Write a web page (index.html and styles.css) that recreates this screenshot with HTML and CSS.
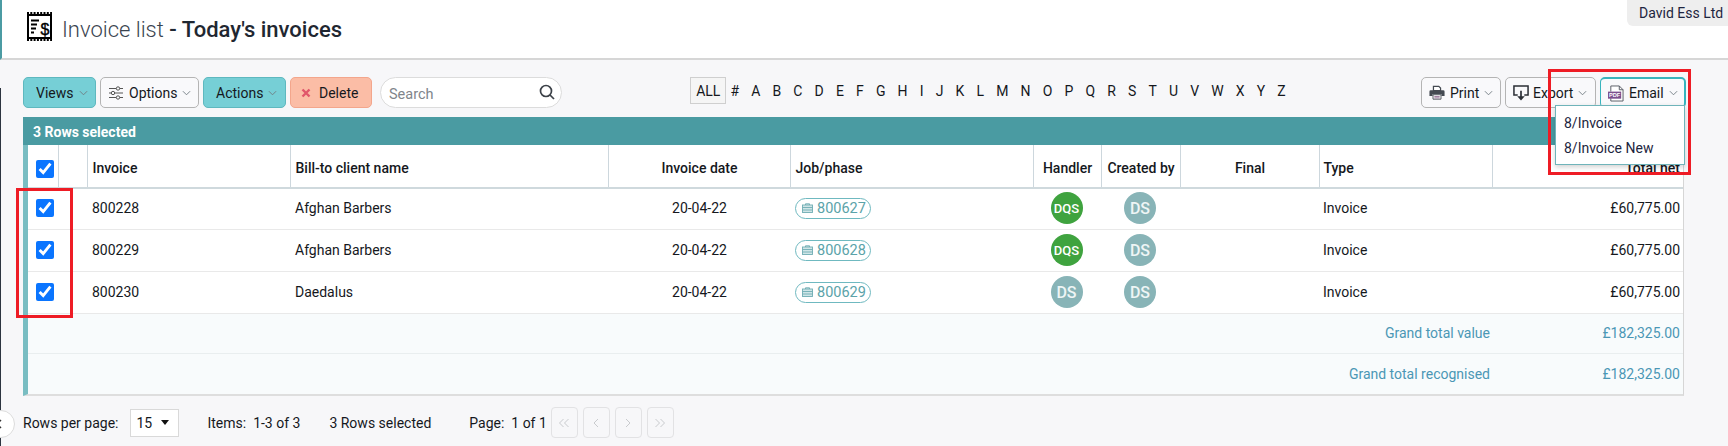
FILE: index.html
```html
<!DOCTYPE html>
<html lang="en">
<head>
<meta charset="utf-8">
<title>Invoice list</title>
<link rel="stylesheet" href="styles.css">
</head>
<body>
<div class="edge"></div>
<header class="top">
  <svg class="title-icon" width="25" height="29" viewBox="0 0 25 29">
    <rect x="1" y="3" width="23" height="23" fill="#fff" stroke="#000" stroke-width="2"/>
    <path d="M0 1h25M0 28h25" stroke="#000" stroke-width="2" stroke-dasharray="2 1.3" fill="none"/>
    <path d="M4 8.5h8M4 12.500h6M4 16.500h5M4 20.500h3" stroke="#000" stroke-width="1.800" fill="none"/>
    <text x="13.500" y="23" class="title-icon-sign">$</text>
  </svg>
  <h1 class="title"><span class="title-light">Invoice list</span> - Today's invoices</h1>
  <div class="company">David Ess Ltd</div>
</header>

<main class="main">
  <div class="toolbar">
    <div class="tool-group">
      <button class="btn btn-teal btn-views">Views<svg class="chev" viewBox="0 0 10 6"><path d="M1 1l4 4 4-4"/></svg></button>
      <button class="btn btn-options">
        <svg class="ico-opt" viewBox="0 0 14 14"><path d="M0 2.500h14M0 7h14M0 11.500h14"/><circle cx="9" cy="2.500" r="1.700"/><circle cx="4" cy="7" r="1.700"/><circle cx="9" cy="11.500" r="1.700"/></svg>
        Options<svg class="chev" viewBox="0 0 10 6"><path d="M1 1l4 4 4-4"/></svg></button>
      <button class="btn btn-teal btn-actions">Actions<svg class="chev" viewBox="0 0 10 6"><path d="M1 1l4 4 4-4"/></svg></button>
      <button class="btn btn-red"><svg class="ico-x" viewBox="0 0 10 10"><path d="M1.500 1.500l7 7M8.500 1.500l-7 7"/></svg>Delete</button>
      <div class="search">
        <span class="search-text">Search</span>
        <svg class="ico-search" viewBox="0 0 16 16"><circle cx="7" cy="7" r="5.500"/><path d="M11 11l4 4"/></svg>
      </div>
    </div>

    <nav class="alpha">
      <span class="alpha-all">ALL</span>
      <span>#</span><span>A</span><span>B</span><span>C</span><span>D</span><span>E</span><span>F</span><span>G</span><span>H</span><span>I</span><span>J</span><span>K</span><span>L</span><span>M</span><span>N</span><span>O</span><span>P</span><span>Q</span><span>R</span><span>S</span><span>T</span><span>U</span><span>V</span><span>W</span><span>X</span><span>Y</span><span>Z</span>
    </nav>

    <div class="tool-group">
      <button class="btn btn-print">
        <svg class="ico-18" viewBox="0 0 18 16"><path d="M5 6V1h6l2 2v3z" fill="#fff" stroke="#444a52" stroke-width="1.400"/><path d="M2 5.500h14a1.500 1.500 0 0 1 1.500 1.500v5H14v-2H4v2H.5V7A1.500 1.500 0 0 1 2 5.500z" fill="#444a52"/><path d="M4.500 10.500h9v5h-9z" fill="#fff" stroke="#444a52"/><path d="M6 12.500h6M6 14h6" stroke="#7a4d7c" stroke-width=".8"/></svg>
        Print<svg class="chev" viewBox="0 0 10 6"><path d="M1 1l4 4 4-4"/></svg></button>
      <button class="btn btn-export">
        <svg class="ico-exp" viewBox="0 0 17 17"><path d="M5 10.500H1V1h15v9.500h-4" fill="none" stroke="#2b2f36" stroke-width="1.600"/><path d="M8.500 6v7" stroke="#2b2f36" stroke-width="1.800"/><path d="M4.500 12h8l-4 4.500z" fill="#2b2f36"/></svg>
        Export<svg class="chev" viewBox="0 0 10 6"><path d="M1 1l4 4 4-4"/></svg></button>
      <button class="btn btn-open">
        <svg class="ico-pdf" viewBox="0 0 17 18"><path d="M3 7V1h9l4 4v12H3v-3" fill="#fff" stroke="#555a62"/><path d="M12 1v4h4" fill="none" stroke="#555a62"/><rect x="0" y="7" width="14" height="7.500" fill="#7c4f8e"/><text x="7" y="13" class="pdf-text">PDF</text></svg>
        Email<svg class="chev" viewBox="0 0 10 6"><path d="M1 1l4 4 4-4"/></svg></button>
    </div>
  </div>

  <section class="panel">
    <div class="panel-bar">3 Rows selected</div>
    <div class="grid">
      <table class="tbl">
        <colgroup>
          <col class="c-check"><col class="c-flag"><col class="c-inv"><col class="c-client"><col class="c-date"><col class="c-job"><col class="c-hand"><col class="c-made"><col class="c-final"><col class="c-type"><col class="c-total">
        </colgroup>
        <thead>
          <tr>
            <th class="cb"><input type="checkbox" checked></th>
            <th></th>
            <th>Invoice</th>
            <th>Bill-to client name</th>
            <th class="ctr">Invoice date</th>
            <th>Job/phase</th>
            <th class="ctr">Handler</th>
            <th class="ctr">Created by</th>
            <th class="ctr">Final</th>
            <th>Type</th>
            <th class="rgt">Total net</th>
          </tr>
        </thead>
        <tbody>
          <tr>
            <td class="cb"><input type="checkbox" checked></td><td></td>
            <td>800228</td><td>Afghan Barbers</td><td class="ctr">20-04-22</td>
            <td><span class="pill"><svg class="ico-case" viewBox="0 0 11 10"><path d="M3.500 2V.8h4V2"/><rect x=".5" y="2" width="10" height="7.500"/><path d="M.5 4.500h10M.5 7h10"/></svg>800627</span></td>
            <td class="ctr"><span class="av av-green">DQS</span></td>
            <td class="ctr"><span class="av">DS</span></td>
            <td></td><td>Invoice</td><td class="rgt">£60,775.00</td>
          </tr>
          <tr>
            <td class="cb"><input type="checkbox" checked></td><td></td>
            <td>800229</td><td>Afghan Barbers</td><td class="ctr">20-04-22</td>
            <td><span class="pill"><svg class="ico-case" viewBox="0 0 11 10"><path d="M3.500 2V.8h4V2"/><rect x=".5" y="2" width="10" height="7.500"/><path d="M.5 4.500h10M.5 7h10"/></svg>800628</span></td>
            <td class="ctr"><span class="av av-green">DQS</span></td>
            <td class="ctr"><span class="av">DS</span></td>
            <td></td><td>Invoice</td><td class="rgt">£60,775.00</td>
          </tr>
          <tr>
            <td class="cb"><input type="checkbox" checked></td><td></td>
            <td>800230</td><td>Daedalus</td><td class="ctr">20-04-22</td>
            <td><span class="pill"><svg class="ico-case" viewBox="0 0 11 10"><path d="M3.500 2V.8h4V2"/><rect x=".5" y="2" width="10" height="7.500"/><path d="M.5 4.500h10M.5 7h10"/></svg>800629</span></td>
            <td class="ctr"><span class="av">DS</span></td>
            <td class="ctr"><span class="av">DS</span></td>
            <td></td><td>Invoice</td><td class="rgt">£60,775.00</td>
          </tr>
        </tbody>
        <tfoot>
          <tr><td colspan="10" class="rgt">Grand total value</td><td class="rgt">£182,325.00</td></tr>
          <tr><td colspan="10" class="rgt">Grand total recognised</td><td class="rgt">£182,325.00</td></tr>
        </tfoot>
      </table>
    </div>
  </section>

  <footer class="pager">
    <span class="pager-label">Rows per page:</span>
    <span class="select">15<svg class="caret" viewBox="0 0 8 5"><path d="M0 0h8L4 5z"/></svg></span>
    <span class="pager-items">Items:&nbsp; 1-3 of 3</span>
    <span class="pager-sel">3 Rows selected</span>
    <span class="pager-page">Page:&nbsp; 1 of 1</span>
    <div class="pager-btns">
      <span class="pg"><svg viewBox="0 0 12 10"><path d="M5.500 1l-4 4 4 4M10.500 1l-4 4 4 4"/></svg></span>
      <span class="pg"><svg viewBox="0 0 12 10"><path d="M8 1L4 5l4 4"/></svg></span>
      <span class="pg"><svg viewBox="0 0 12 10"><path d="M4 1l4 4-4 4"/></svg></span>
      <span class="pg"><svg viewBox="0 0 12 10"><path d="M1.500 1l4 4-4 4M6.500 1l4 4-4 4"/></svg></span>
    </div>
  </footer>
</main>

<div class="collapse"><svg viewBox="0 0 6 10"><path d="M5 1L1 5l4 4"/></svg></div>

<ul class="menu">
  <li>8/Invoice</li>
  <li>8/Invoice New</li>
</ul>
<div class="mark mark-checks"></div>
<div class="mark mark-email"></div>
</body>
</html>
```
FILE: styles.css
```css
* { box-sizing: border-box; }
html, body { margin: 0; height: 446px; overflow: hidden; }
body {
  position: relative;
  background: #f7f7f9;
  font-family: Roboto, "Liberation Sans", sans-serif;
  font-size: 14px;
  color: #15181d;
}
.edge {
  position: absolute;
  left: 0; top: 88px; bottom: 0;
  width: 1px;
  background: #2c3440;
}
.top {
  height: 60px;
  background: #fff;
  border-bottom: 2px solid #d6d6d6;
  border-left: 2px solid #4b9ba3;
  display: flex;
  align-items: center;
  padding: 0 0 2px 25px;
}
.title-icon { flex: none; margin: -3px 10px 0 0; }
.title-icon-sign { font: 400 16px "Liberation Sans", sans-serif; fill: #000; stroke: #000; stroke-width: .4; }
.title { margin: 3px 0 0; font-size: 22px; font-weight: 500; color: #1f2731; }
.title-light { font-weight: 300; color: #3a4450; }
.company {
  position: absolute;
  top: 0; right: 0;
  width: 101px; height: 26px;
  padding: 0 4px 0 12px;
  background: #eeeeee;
  border-bottom-left-radius: 6px;
  line-height: 27px;
  font-size: 14px;
  white-space: nowrap;
  color: #1d2540;
}
.main { padding: 17px 42px 0 23px; }
.toolbar { display: flex; justify-content: space-between; align-items: flex-start; height: 31px; }
.tool-group { display: flex; gap: 4px; }
.btn {
  height: 31px;
  flex: none;
  display: flex;
  align-items: center;
  padding: 0 0 0 8px;
  border: 1px solid #b4b4b4;
  border-radius: 5px;
  background: #f9f9fb;
  font: 400 14px Roboto, sans-serif;
  color: #15181d;
  white-space: nowrap;
}
.btn-views { width: 73px; }
.btn-options { width: 99px; }
.btn-actions { width: 83px; }
.btn-print { width: 80px; padding-left: 7px; }
.btn-export { width: 91px; padding-left: 7px; }
.btn-teal { background: #76cfd6; border-color: #5eb8bf; padding-left: 12px; }
.btn-red { width: 82px; background: #fbbda6; border-color: #f3a68c; padding-left: 10px; }
.btn-open { width: 86px; padding-left: 7px; border: 1px solid #38b4bd; border-top-width: 2px; border-right-width: 2px; }
.chev { width: 9px; height: 6px; margin-left: 5px; fill: none; stroke: #707a80; stroke-width: 1; }
.ico-opt { width: 14px; height: 14px; margin-right: 6px; fill: #f9f9fb; stroke: #555; stroke-width: 1; }
.ico-x { width: 10px; height: 10px; margin-right: 8px; fill: none; stroke: #e0566b; stroke-width: 2.400; }
.ico-18 { width: 16px; height: 15px; margin-right: 5px; }
.ico-exp { width: 16px; height: 16px; margin-right: 4px; }
.ico-pdf { width: 16px; height: 17px; margin-right: 5px; }
.pdf-text { font: 700 6px "Liberation Sans", sans-serif; fill: #fff; text-anchor: middle; }
.search {
  width: 182px; height: 31px;
  margin-left: 4px;
  display: flex;
  align-items: center;
  justify-content: space-between;
  padding: 3px 6px 0 8px;
  background: #fff;
  border: 1px solid #dcdcdc;
  border-radius: 16px;
}
.search-text { color: #7f858b; font-size: 14.500px; }
.ico-search { width: 16px; height: 16px; margin-top: -4px; fill: none; stroke: #3c4148; stroke-width: 1.700; }
.alpha { display: flex; align-items: center; gap: 12.150px; height: 27px; margin-right: 7px; font-size: 14px; font-weight: 400; }
.alpha-all {
  width: 36px; height: 27px;
  margin-right: -8px;
  display: flex; align-items: center; justify-content: center;
  border: 1px solid #cfcfcf;
  background: #f5f5f5;
}
.panel { margin-top: 9px; margin-right: 2px; }
.panel-bar {
  height: 28px;
  padding: 0 0 0 10px;
  background: #4a9ba2;
  color: #fff;
  font-size: 14px;
  font-weight: 700;
  line-height: 30px;
}
.grid {
  background: #fff;
  border-left: 5px solid #79bdc2;
  border-right: 1px solid #d6d6d6;
  border-bottom: 2px solid #dedede;
}
.tbl { width: 100%; table-layout: fixed; border-collapse: collapse; }
.c-check { width: 30px; } .c-flag { width: 29px; } .c-inv { width: 203px; } .c-client { width: 318px; }
.c-date { width: 182px; } .c-job { width: 243px; } .c-hand { width: 68px; } .c-made { width: 79px; }
.c-final { width: 139px; } .c-type { width: 173px; } .c-total { width: 191px; }
.tbl th, .tbl td { padding: 0 4px 0 5px; text-align: left; white-space: nowrap; }
.tbl th {
  height: 43px;
  padding-top: 4px;
  font-weight: 500;
  border-bottom: 2px solid #cfd9dd;
  border-right: 1px solid #cdd7dd;
}
.tbl th:last-child { border-right: 0; }
.tbl tbody td { height: 42px; border-bottom: 1px solid #e9e9e9; }
.tbl tbody tr:first-child td { height: 41px; padding-bottom: 1px; }
.tbl tbody tr:last-child td { height: 42px; }
.tbl .ctr { text-align: center; }
.tbl .rgt { text-align: right; padding-right: 3px; }
.tbl th:nth-child(10), .tbl td:nth-child(10) { padding-left: 4px; }
.tbl td:nth-child(7), .tbl td:nth-child(8) { padding-right: 5px; padding-left: 4px; }
.tbl .cb { padding-left: 8px; padding-right: 0; }
.tbl th.cb { padding-top: 6px; }
.cb input { display: block; width: 18px; height: 18px; margin: 0; accent-color: #0a75ff; }
.tbl tfoot td { height: 40px; background: #f8fbfc; color: #4b97b5; border-bottom: 1px solid #e9eeef; }
.tbl tfoot tr:last-child td { border-bottom: 0; height: 41px; }
.tbl tfoot td:first-child { padding-right: 2px; }
.pill {
  display: inline-flex;
  align-items: center;
  height: 21px;
  padding: 0 4px 0 6px;
  border: 1px solid #6fb9c0;
  border-radius: 11px;
  color: #5ba3a9;
  font-size: 14.500px;
  vertical-align: middle;
}
.ico-case { width: 11px; height: 10px; margin-right: 4px; fill: #cfe5e7; stroke: #6fadb3; stroke-width: .9; }
.av {
  display: inline-flex;
  align-items: center;
  justify-content: center;
  width: 32px; height: 32px;
  border-radius: 50%;
  background: #88b4b7;
  color: #eef5f5;
  font-size: 16px;
  font-weight: 500;
  vertical-align: middle;
}
.av-green { background: #3fa33f; font-size: 13px; color: #fff; }
.pager { display: flex; align-items: center; height: 31px; margin-top: 12px; margin-bottom: 0; position: relative; top: -1px; }
.select {
  width: 49px; height: 28px;
  margin-left: 12px;
  display: flex; align-items: center; justify-content: space-between;
  padding: 0 9px 0 5px;
  background: #fff;
  border: 1px solid #d9d9d9;
}
.caret { width: 8px; height: 5px; fill: #111; }
.pager-items { margin-left: 28px; }
.pager-sel { margin-left: 29px; }
.pager-page { margin-left: 38px; }
.pager-btns { display: flex; gap: 5px; margin-left: 4px; }
.pg {
  width: 27px; height: 31px;
  display: flex; align-items: center; justify-content: center;
  border: 1px solid #e2e2e4;
  border-radius: 4px;
}
.pg svg { width: 12px; height: 10px; fill: none; stroke: #c9cbce; stroke-width: 1; }
.collapse {
  position: absolute;
  left: -13px; top: 410px;
  width: 28px; height: 28px;
  display: flex; align-items: center; justify-content: flex-end;
  padding-right: 12px;
  background: #fff;
  border: 1px solid #dcdcdc;
  border-radius: 50%;
}
.collapse svg { width: 6px; height: 10px; fill: none; stroke: #333; stroke-width: 1.500; }
.menu {
  position: absolute;
  left: 1555px; top: 105px;
  width: 130px; height: 60px;
  margin: 0;
  padding: 5px 0 0 8px;
  list-style: none;
  background: #fff;
  border: 1px solid #6fb4ba;
  box-shadow: 0 2px 5px rgba(0,0,0,.18);
  color: #1d2540;
  font-size: 14px;
}
.menu li { height: 25px; line-height: 24px; }
.mark { position: absolute; border: 3px solid #ee1c25; pointer-events: none; }
.mark-checks { left: 16px; top: 188px; width: 57px; height: 130px; }
.mark-email { left: 1548px; top: 69px; width: 143px; height: 106px; }
```
